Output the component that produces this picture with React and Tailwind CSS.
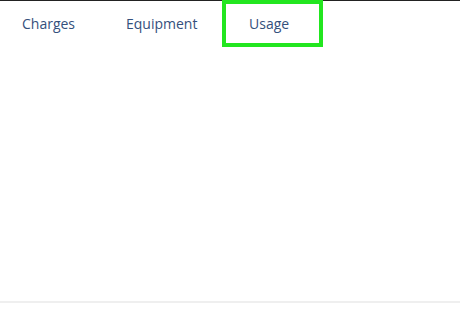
import React from "react";

const tabs = [
  { label: "Charges", w: "w-[104px]" },
  { label: "Equipment", w: "w-[96px]" },
];

export default function App() {
  return (
    <div className="w-[460px] h-[320px] bg-white flex flex-col font-['Open_Sans','Liberation_Sans',sans-serif]">
      {/* tab bar */}
      <div className="border-t border-[#222222] flex items-start pl-[22px] text-[14px] text-[#34507c]">
        {tabs.map((t) => (
          <div key={t.label} className={`${t.w} h-[44px] flex items-center`}>
            {t.label}
          </div>
        ))}
        <div className="-mt-px h-[47px] w-[101px] border-4 border-[#22e61f] flex items-center pl-[23px]">
          Usage
        </div>
      </div>
      <div className="flex-1" />
      <div className="h-[2px] bg-[#efefef] mb-[17px]" />
    </div>
  );
}
